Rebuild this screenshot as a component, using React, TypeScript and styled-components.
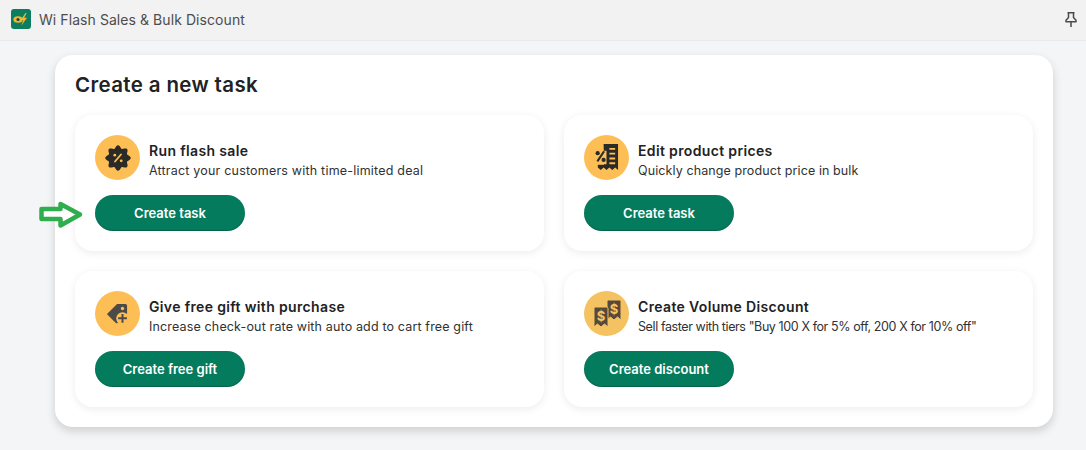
import React from "react";
import styled, { createGlobalStyle } from "styled-components";

const Global = createGlobalStyle`
  html, body { margin: 0; padding: 0; background: #f4f5f7; }
  body { font-family: "Inter", "Liberation Sans", sans-serif; width: 1086px; height: 450px; overflow: hidden; }
`;

const Page = styled.div`
  width: 1086px;
  height: 450px;
  display: flex;
  flex-direction: column;
  position: relative;
`;

const TopBar = styled.header`
  height: 41px;
  box-sizing: border-box;
  display: flex;
  align-items: center;
  padding: 0 9px 2px 11px;
  background: #f1f2f1;
  border-bottom: 1px solid #e9eaea;
`;

const AppName = styled.span`
  margin-left: 8px;
  flex: 1;
  font-size: 14px;
  color: #4d4d4d;
  letter-spacing: 0.07px;
`;

const Main = styled.main`
  padding: 14px 33px 0 55px;
`;

const Panel = styled.section`
  box-sizing: border-box;
  width: 998px;
  height: 372px;
  padding: 16px 20px 20px;
  background: #fff;
  border-radius: 18px;
  box-shadow: 0 4px 10px rgba(0, 0, 0, 0.16);
`;

const Title = styled.h1`
  margin: 0 0 16px;
  height: 28px;
  line-height: 28px;
  font-size: 20.5px;
  font-weight: 600;
  letter-spacing: 0.36px;
  color: #202223;
`;

const Grid = styled.div`
  display: grid;
  grid-template-columns: 469px 469px;
  grid-auto-rows: 136px;
  gap: 20px;
`;

const Card = styled.article`
  box-sizing: border-box;
  padding: 20px;
  background: #fff;
  border-radius: 18px;
  box-shadow: 0 2px 8px rgba(0, 0, 0, 0.08);
  display: flex;
  flex-direction: column;
  gap: 15px;
`;

const CardHead = styled.div`
  display: flex;
  align-items: center;
  gap: 9px;
  height: 45px;
`;

const IconCircle = styled.div<{ $bg: string }>`
  width: 45px;
  height: 45px;
  flex: none;
  border-radius: 50%;
  background: ${(p) => p.$bg};
  display: flex;
  align-items: center;
  justify-content: center;
`;

const CardText = styled.div`
  display: flex;
  flex-direction: column;
  gap: 1px;
  padding-top: 6px;
`;

const CardTitle = styled.h2`
  margin: 0;
  font-size: 14px;
  line-height: 20px;
  font-weight: 600;
  letter-spacing: 0.35px;
  color: #202223;
`;

const CardDesc = styled.p<{ $tracking: number }>`
  margin: 0;
  font-size: 12.5px;
  line-height: 18px;
  letter-spacing: ${(p) => p.$tracking}px;
  color: #303233;
`;

const ActionButton = styled.button`
  width: 150px;
  height: 36px;
  border: 0;
  border-radius: 18px;
  background: #047b5d;
  box-shadow: inset 0 -1px 1px rgba(0, 0, 0, 0.2);
  color: #fff;
  font-family: inherit;
  font-size: 13px;
  font-weight: 600;
`;

const ArrowMark = styled.svg`
  position: absolute;
  left: 38px;
  top: 200px;
`;

const PinIcon = () => (
  <svg width="12" height="15" viewBox="0 0 12 15" fill="none" stroke="#4a4a4a" strokeWidth="1.5">
    <path d="M2.500 .8h7M3.500 .8v4.700L1 8.200v1.600h10V8.200L8.500 5.500V.8M6 9.800V15" strokeLinejoin="round" />
  </svg>
);

const Logo = () => (
  <svg width="20" height="20" viewBox="0 0 20 20">
    <rect width="20" height="20" rx="3" fill="#0c7d5f" />
    <ellipse cx="7" cy="10.500" rx="4.600" ry="3.200" fill="#f2b731" />
    <circle cx="7" cy="10.500" r="1.600" fill="#24402f" />
    <path d="M14.500 4 9.600 11h2.600l-1.800 5.400 5.600-7.600h-2.800L15.600 4z" fill="#f2b731" />
  </svg>
);

const badgePath = (() => {
  const lobes = 8;
  const pts: string[] = [];
  const steps = 96;
  for (let i = 0; i <= steps; i++) {
    const a = (i / steps) * Math.PI * 2;
    const r = 11.3 + 1.5 * Math.cos(lobes * a);
    pts.push(`${(13 + r * Math.cos(a)).toFixed(2)} ${(13 + r * Math.sin(a)).toFixed(2)}`);
  }
  return `M${pts.join("L")}z`;
})();

const BadgeIcon = () => (
  <svg width="26" height="26" viewBox="0 0 26 26">
    <path d={badgePath} fill="#2b2a27" />
    <path d="M16 9.500 10 16.500" stroke="#fdbf55" strokeWidth="1.800" strokeLinecap="round" />
    <circle cx="9.800" cy="10.200" r="1.400" fill="#fdbf55" />
    <circle cx="16.200" cy="15.800" r="1.400" fill="#fdbf55" />
  </svg>
);

const ReceiptIcon = () => (
  <svg width="25" height="31" viewBox="0 0 26 30">
    <path d="M10 1h15v27l-3-2.500-3 2.500-3-2.500-3 2.500-3-2.500-3 2.500-3-2.500v-3h6.500z" fill="#2b2a27" />
    <path d="M16 6h6M16 11h6M16 16h6M16 21h6" stroke="#fdbf55" strokeWidth="2" />
    <rect x="0" y="8" width="13" height="14" fill="#fdbf55" />
    <path d="M10.500 8.500 3.500 19" stroke="#2b2a27" strokeWidth="2.200" />
    <circle cx="3.800" cy="10.500" r="2.200" fill="#2b2a27" />
    <circle cx="10" cy="17.500" r="2.200" fill="#2b2a27" />
  </svg>
);

const TagIcon = () => (
  <svg width="25" height="25" viewBox="0 0 30 30">
    <path d="M14.500 3.500H24.500a2 2 0 0 1 2 2V15L15.500 26a2 2 0 0 1-2.800 0L3 16.500a1 1 0 0 1 0-1.500z" fill="#4b4a48" />
    <circle cx="21" cy="9" r="2" fill="#fdbf55" />
    <circle cx="21" cy="21" r="7.500" fill="#fdbf55" />
    <path d="M21 15.500v10.500M15.800 20.800h10.500" stroke="#4b4a48" strokeWidth="2.400" />
  </svg>
);

const Bill = ({ x, y }: { x: number; y: number }) => (
  <g transform={`translate(${x} ${y})`}>
    <path d="M0 1.500A1.500 1.500 0 0 1 1.500 0h11A1.500 1.500 0 0 1 14 1.500V20l-3.500-3-3.500 3-3.500-3L0 20z" fill="#57493a" stroke="#f5c262" strokeWidth="1" />
    <text x="7" y="13.500" textAnchor="middle" fontFamily="Inter, sans-serif" fontWeight="700" fontSize="13" fill="#f5c262">$</text>
  </g>
);

const BillsIcon = () => (
  <svg width="32" height="32" viewBox="0 0 32 32">
    <Bill x={16} y={2} />
    <Bill x={3} y={9} />
  </svg>
);

const tasks = [
  { title: "Run flash sale", desc: "Attract your customers with time-limited deal", tracking: 0.2, action: "Create task", icon: <BadgeIcon />, bg: "#fdbf55" },
  { title: "Edit product prices", desc: "Quickly change product price in bulk", tracking: 0.1, action: "Create task", icon: <ReceiptIcon />, bg: "#fdbf55" },
  { title: "Give free gift with purchase", desc: "Increase check-out rate with auto add to cart free gift", tracking: 0.15, action: "Create free gift", icon: <TagIcon />, bg: "#fdbf55" },
  { title: "Create Volume Discount", desc: 'Sell faster with tiers "Buy 100 X for 5% off, 200 X for 10% off"', tracking: -0.4, action: "Create discount", icon: <BillsIcon />, bg: "#f5c262" },
];

export default function App() {
  return (
    <Page>
      <Global />
      <TopBar>
        <Logo />
        <AppName>Wi Flash Sales &amp; Bulk Discount</AppName>
        <PinIcon />
      </TopBar>
      <Main>
        <Panel>
          <Title>Create a new task</Title>
          <Grid>
            {tasks.map((t) => (
              <Card key={t.title}>
                <CardHead>
                  <IconCircle $bg={t.bg}>{t.icon}</IconCircle>
                  <CardText>
                    <CardTitle>{t.title}</CardTitle>
                    <CardDesc $tracking={t.tracking}>{t.desc}</CardDesc>
                  </CardText>
                </CardHead>
                <ActionButton>{t.action}</ActionButton>
              </Card>
            ))}
          </Grid>
        </Panel>
      </Main>
      <ArrowMark width="46" height="30" viewBox="0 0 46 30">
        <path d="M3.500 9h19V4L42 14.500 22.500 25.500V19h-19z" fill="#fff" stroke="#2fae4e" strokeWidth="4.500" strokeLinejoin="round" />
      </ArrowMark>
    </Page>
  );
}
